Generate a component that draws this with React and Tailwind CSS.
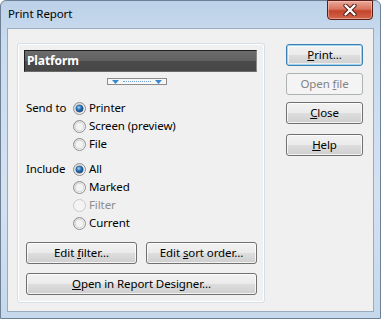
const FONT = { fontFamily: '"Noto Sans", "Open Sans", sans-serif' }

function Radio({ checked, disabled }) {
  if (disabled) {
    return (
      <svg width="13" height="13" viewBox="0 0 13 13" className="shrink-0">
        <circle cx="6.5" cy="6.5" r="6" fill="#f4f4f4" stroke="#c9c9c9" />
      </svg>
    )
  }
  return (
    <svg width="13" height="13" viewBox="0 0 13 13" className="shrink-0">
      <defs>
        <linearGradient id="rbg" x1="0" y1="0" x2="1" y2="1">
          <stop offset="0" stopColor="#d6d6d6" />
          <stop offset="1" stopColor="#ffffff" />
        </linearGradient>
        <radialGradient id="rdot" cx="0.4" cy="0.35" r="0.7">
          <stop offset="0" stopColor="#a8dcf8" />
          <stop offset="0.45" stopColor="#2f78bd" />
          <stop offset="1" stopColor="#0d3e73" />
        </radialGradient>
      </defs>
      <circle cx="6.5" cy="6.5" r="6" fill="url(#rbg)" stroke="#8e8f8f" />
      <circle cx="6.5" cy="6.5" r="4.2" fill="#f3f3f3" stroke="#cfcfcf" strokeWidth="0.8" />
      {checked && <circle cx="6.5" cy="6.5" r="3.6" fill="url(#rdot)" stroke="#1b4f85" strokeWidth="0.6" />}
    </svg>
  )
}

function Option({ label, children, checked, disabled }) {
  return (
    <div className="flex h-[18px] items-center">
      <div className="w-[49px] pl-[2px]">{label}</div>
      <Radio checked={checked} disabled={disabled} />
      <span className={`ml-[3px] ${disabled ? 'text-[#8d8d8d]' : ''}`}>{children}</span>
    </div>
  )
}

function Button({ children, className = '', variant = 'normal' }) {
  const styles = {
    normal:
      'border-[#707070] bg-[linear-gradient(to_bottom,#f2f2f2_0%,#ebebeb_48%,#dddddd_52%,#cfcfcf_100%)] shadow-[inset_0_0_0_1px_rgba(255,255,255,0.75)]',
    primary:
      'border-[#3c7fb1] bg-[linear-gradient(to_bottom,#f2f2f2_0%,#ebebeb_48%,#dddddd_52%,#cfcfcf_100%)] shadow-[inset_0_0_0_1px_#9fd3f2,inset_0_0_0_2px_rgba(255,255,255,0.6)]',
    disabled: 'border-[#adb2b5] bg-[#f4f4f4] text-[#838383]',
  }
  return (
    <div
      className={`flex h-[22px] items-center justify-center rounded-[3px] border ${styles[variant]} ${className}`}
    >
      <span>{children}</span>
    </div>
  )
}

function CloseButton() {
  return (
    <div className="absolute right-[7px] top-[-1px] flex h-[20px] w-[46px] items-center justify-center rounded-b-[4px] border border-[#5a1e16] bg-[linear-gradient(to_bottom,#eaa899_0%,#d9745f_45%,#c4442b_55%,#d2664c_100%)] shadow-[inset_0_0_0_1px_rgba(255,220,210,0.45)]">
      <svg width="14" height="12" viewBox="0 0 14 12">
        <path d="M2.5 1.5 L11.5 10.5 M11.5 1.5 L2.5 10.5" stroke="#4a1810" strokeWidth="4.2" strokeLinecap="round" />
        <path d="M2.5 1.5 L11.5 10.5 M11.5 1.5 L2.5 10.5" stroke="#ffffff" strokeWidth="2.4" strokeLinecap="round" />
      </svg>
    </div>
  )
}

function Handle() {
  return (
    <div className="ml-[83px] mt-[6px] flex h-[7px] w-[60px] items-center justify-between border border-[#8c8c8c] bg-[#f7f7f7] px-[4px]">
      <svg width="7" height="4" viewBox="0 0 7 4">
        <path d="M0 0 H7 L3.5 4 Z" fill="#3b87cf" />
      </svg>
      <div className="mx-[4px] h-0 flex-1 border-t border-dotted border-[#6a9fd4]" />
      <svg width="7" height="4" viewBox="0 0 7 4">
        <path d="M0 0 H7 L3.5 4 Z" fill="#3b87cf" />
      </svg>
    </div>
  )
}

export default function App() {
  return (
    <div className="text-[11.5px] tracking-[-0.1px] text-black" style={FONT}>
      <div className="relative h-[319px] w-[381px] rounded-t-[6px] border border-[#6d8096] bg-[linear-gradient(to_bottom,#bcd1e8_0%,#c9dbee_12%,#d3e2f1_60%,#c6d8ec_100%)]">
        <div className="flex h-[27px] items-center pb-[2px] pl-[7px]">Print Report</div>
        <CloseButton />
        <div className="mx-[6px] flex h-[284px] border border-[#9aabbd] bg-[#f0f0f0] pl-[9px] pt-[14px]">
          <div className="flex h-[260px] w-[248px] flex-col rounded-[3px] border border-[#d5dfe5] pl-[6px] pt-[6px] shadow-[inset_0_0_0_1px_#ffffff]">
            <div className="flex h-[22px] w-[233px] items-center border-b border-l border-r border-t border-[#1e1e1e] border-b-[#6a6a6a] border-r-[#8a8a8a] bg-[linear-gradient(to_bottom,#6c6c6c_0%,#606060_50%,#4a4a4a_52%,#474747_100%)] pl-[2px] text-[12px] font-bold text-white">
              Platform
            </div>
            <Handle />
            <div className="mt-[14px]">
              <Option label="Send to" checked>Printer</Option>
              <Option>Screen (preview)</Option>
              <Option>File</Option>
            </div>
            <div className="mt-[7px]">
              <Option label="Include" checked>All</Option>
              <Option>Marked</Option>
              <Option disabled>Filter</Option>
              <Option>Current</Option>
            </div>
            <div className="ml-[2px] mt-[10px] flex gap-[9px]">
              <Button className="w-[111px]">
                Edit <u>f</u>ilter...
              </Button>
              <Button className="w-[111px]">
                Edit <u>s</u>ort order...
              </Button>
            </div>
            <Button className="ml-[2px] mt-[9px] w-[231px]">
              <u>O</u>pen in Report Designer...
            </Button>
          </div>
          <div className="ml-[21px] flex flex-col pt-[1px]">
            <Button variant="primary" className="w-[77px]">
              <u>P</u>rint...
            </Button>
            <Button variant="disabled" className="mt-[7px] w-[77px]">
              Open <u>f</u>ile
            </Button>
            <Button className="mt-[7px] w-[77px]">
              <u>C</u>lose
            </Button>
            <Button className="mt-[10px] w-[77px]">
              <u>H</u>elp
            </Button>
          </div>
        </div>
      </div>
    </div>
  )
}
